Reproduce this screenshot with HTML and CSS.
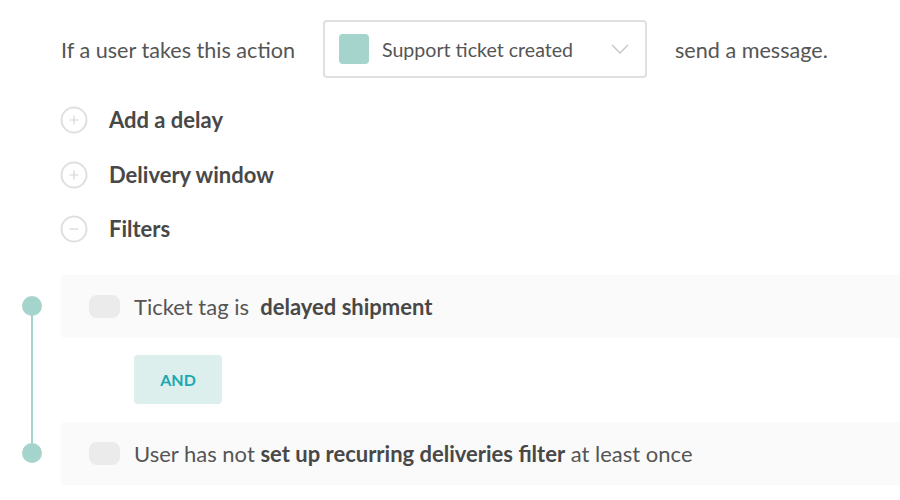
FILE: index.html
```html
<!DOCTYPE html>
<html>
<head>
<meta charset="utf-8">
<link rel="stylesheet" href="styles.css">
</head>
<body>
<div class="page">
  <div class="trigger">
    <span class="label">If a user takes this action</span>
    <div class="select">
      <span class="swatch"></span>
      <span class="select-text">Support ticket created</span>
      <svg class="chev" width="18" height="10" viewBox="0 0 18 10"><path d="M1 1 L9 9 L17 1" fill="none" stroke="#c4c4c4" stroke-width="1.4"/></svg>
    </div>
    <span class="label">send a message.</span>
  </div>

  <div class="options">
    <div class="opt">
      <svg class="circ" width="28" height="28" viewBox="0 0 28 28"><circle cx="14" cy="14" r="12.5" fill="none" stroke="#e0e0e0" stroke-width="2"/><path d="M14 9.5v9M9.5 14h9" stroke="#d6d6d6" stroke-width="1.2"/></svg>
      <span>Add a delay</span>
    </div>
    <div class="opt">
      <svg class="circ" width="28" height="28" viewBox="0 0 28 28"><circle cx="14" cy="14" r="12.5" fill="none" stroke="#e0e0e0" stroke-width="2"/><path d="M14 9.5v9M9.5 14h9" stroke="#d6d6d6" stroke-width="1.2"/></svg>
      <span>Delivery window</span>
    </div>
    <div class="opt">
      <svg class="circ" width="28" height="28" viewBox="0 0 28 28"><circle cx="14" cy="14" r="12.5" fill="none" stroke="#e0e0e0" stroke-width="2"/><path d="M9.5 14h9" stroke="#d6d6d6" stroke-width="1.2"/></svg>
      <span>Filters</span>
    </div>
  </div>

  <div class="filters">
    <div class="timeline"></div>
    <div class="filter">
      <span class="dot"></span>
      <span class="toggle"></span>
      <span class="ftext">Ticket tag is&nbsp; <b>delayed shipment</b></span>
    </div>
    <div class="and-row"><span class="and">AND</span></div>
    <div class="filter">
      <span class="dot"></span>
      <span class="toggle"></span>
      <span class="ftext">User has not <b>set up recurring deliveries filter</b> at least once</span>
    </div>
  </div>
</div>
</body>
</html>
```

FILE: styles.css
```css
html, body {
  margin: 0;
  padding: 0;
  background: #fff;
}
body {
  font-family: "Lato", "Open Sans", sans-serif;
  color: #555;
  width: 900px;
  height: 500px;
  overflow: hidden;
}
.page {
  padding: 20px 0 0 61px;
}
.trigger {
  display: flex;
  align-items: center;
  gap: 28px;
  height: 58px;
}
.label {
  font-size: 21.6px;
  color: #555;
  position: relative;
  top: 1px;
}
.select {
  box-sizing: border-box;
  width: 324px;
  height: 58px;
  border: 2px solid #e0e0e0;
  border-radius: 4px;
  display: flex;
  align-items: center;
  padding: 0 16px 0 14px;
}
.swatch {
  width: 30px;
  height: 30px;
  border-radius: 4px;
  background: #a5d4cd;
  flex: none;
}
.select-text {
  font-size: 19.6px;
  color: #555;
  margin-left: 13px;
  flex: 1;
}
.chev {
  flex: none;
}
.options {
  margin-top: 28px;
  display: flex;
  flex-direction: column;
  gap: 26.5px;
}
.opt {
  display: flex;
  align-items: center;
  gap: 21px;
  height: 28px;
  margin-left: -1px;
}
.opt span {
  font-size: 22px;
  font-weight: 700;
  color: #484848;
  line-height: 26px;
}
.filters {
  position: relative;
  margin-top: 32px;
}
.timeline {
  position: absolute;
  left: -30px;
  top: 30px;
  width: 2px;
  height: 150px;
  background: #a5d4cd;
}
.filter {
  position: relative;
  height: 63px;
  background: #fafafa;
  border-radius: 4px 0 0 4px;
  display: flex;
  align-items: center;
  padding-left: 28px;
}
.dot {
  position: absolute;
  left: -39px;
  top: 21px;
  width: 20px;
  height: 20px;
  border-radius: 50%;
  background: #a5d4cd;
}
.toggle {
  width: 31px;
  height: 23px;
  border-radius: 8px;
  background: #ebebeb;
  flex: none;
}
.ftext {
  margin-left: 14px;
  font-size: 22px;
  color: #555;
  line-height: 26px;
}
.ftext b {
  color: #484848;
}
.and-row {
  padding: 17px 0 18px 73px;
}
.and {
  display: inline-flex;
  align-items: center;
  justify-content: center;
  width: 88px;
  height: 49px;
  border-radius: 4px;
  background: #ddefed;
  color: #1aa9b2;
  font-weight: 700;
  font-size: 16px;
}
```
